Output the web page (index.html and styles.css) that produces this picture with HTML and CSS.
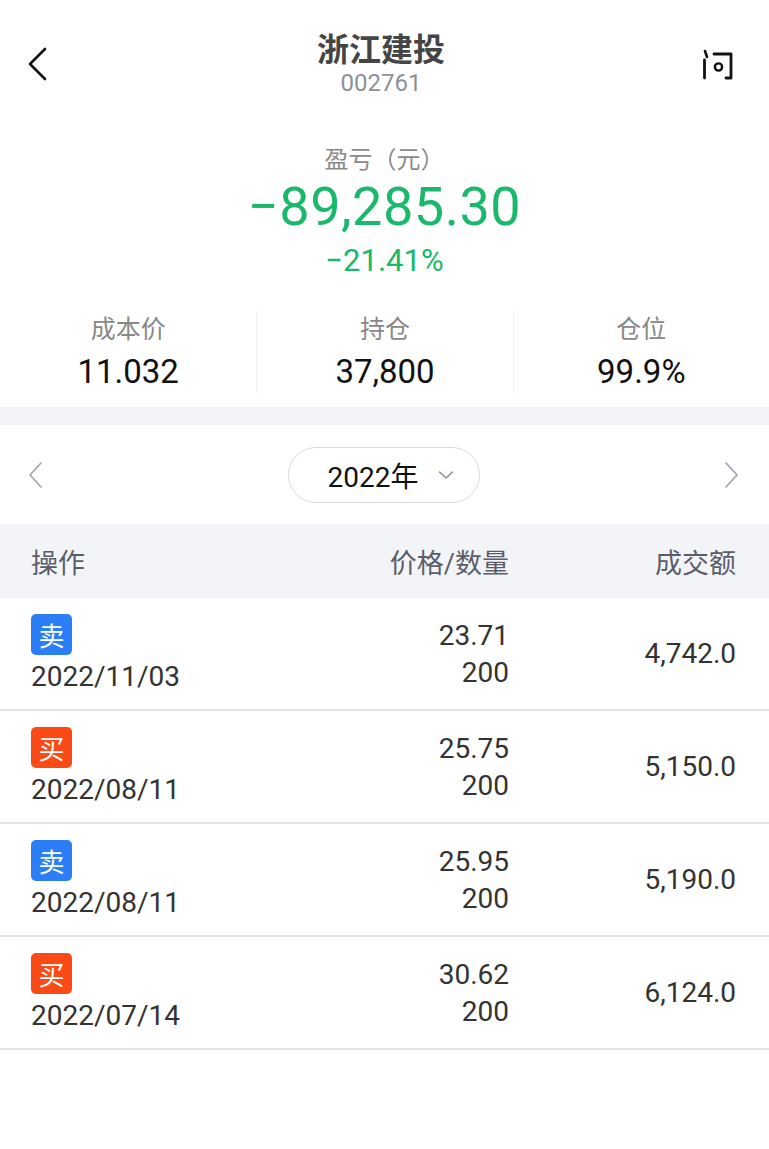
FILE: index.html
```html
<!DOCTYPE html>
<html lang="zh-CN">
<head>
    <meta charset="UTF-8">
    <meta name="viewport" content="width=device-width, initial-scale=1.0">
    <title>浙江建投 交易记录</title>
    <link rel="stylesheet" href="styles.css">
</head>
<body>
    <!-- Top bar -->
    <header class="topbar">
        <a class="back" href="#back">
            <svg width="24" height="36" viewBox="0 0 24 36">
                <path d="M18 3 L3 18 L18 33" fill="none" stroke="#111" stroke-width="2.6" stroke-linecap="round" stroke-linejoin="round"/>
            </svg>
        </a>
        <div class="title">
            <div class="name">浙江建投</div>
            <div class="code">002761</div>
        </div>
        <a class="ask" href="#ask">
            <svg width="34" height="34" viewBox="0 0 34 34">
                <path d="M4 2 L6 8" fill="none" stroke="#111" stroke-width="2.6" stroke-linecap="round"/>
                <path d="M3.5 11 V29" fill="none" stroke="#111" stroke-width="2.8" stroke-linecap="round"/>
                <path d="M13 5 H30 V29 H25" fill="none" stroke="#111" stroke-width="2.8" stroke-linecap="round" stroke-linejoin="round"/>
                <circle cx="17.5" cy="18" r="3.6" fill="none" stroke="#111" stroke-width="2.4"/>
            </svg>
        </a>
    </header>

    <!-- Profit summary -->
    <section class="summary">
        <div class="label">盈亏（元）</div>
        <div class="pnl">−89,285.30</div>
        <div class="pct">−21.41%</div>
    </section>

    <section class="stats">
        <div class="stat">
            <div class="stat-label">成本价</div>
            <div class="stat-value">11.032</div>
        </div>
        <div class="stat">
            <div class="stat-label">持仓</div>
            <div class="stat-value">37,800</div>
        </div>
        <div class="stat">
            <div class="stat-label">仓位</div>
            <div class="stat-value">99.9%</div>
        </div>
    </section>

    <div class="gap"></div>

    <!-- Year switcher -->
    <div class="year-row">
        <svg class="arrow" width="18" height="28" viewBox="0 0 18 28">
            <path d="M14 2 L3 14 L14 26" fill="none" stroke="#9da1ab" stroke-width="1.6" stroke-linecap="round" stroke-linejoin="round"/>
        </svg>
        <button class="year-pill">
            <span>2022年</span>
            <svg width="16" height="10" viewBox="0 0 16 10">
                <path d="M1.5 2 L8 8 L14.5 2" fill="none" stroke="#8a8fa0" stroke-width="1.6" stroke-linecap="round" stroke-linejoin="round"/>
            </svg>
        </button>
        <svg class="arrow" width="18" height="28" viewBox="0 0 18 28">
            <path d="M4 2 L15 14 L4 26" fill="none" stroke="#9da1ab" stroke-width="1.6" stroke-linecap="round" stroke-linejoin="round"/>
        </svg>
    </div>

    <!-- Trades -->
    <div class="table">
        <div class="thead">
            <div>操作</div>
            <div class="num">价格/数量</div>
            <div class="num">成交额</div>
        </div>

        <div class="trade">
            <div class="op">
                <span class="badge sell">卖</span>
                <div class="date">2022/11/03</div>
            </div>
            <div class="price num">
                <div>23.71</div>
                <div>200</div>
            </div>
            <div class="amount num">4,742.0</div>
        </div>

        <div class="trade">
            <div class="op">
                <span class="badge buy">买</span>
                <div class="date">2022/08/11</div>
            </div>
            <div class="price num">
                <div>25.75</div>
                <div>200</div>
            </div>
            <div class="amount num">5,150.0</div>
        </div>

        <div class="trade">
            <div class="op">
                <span class="badge sell">卖</span>
                <div class="date">2022/08/11</div>
            </div>
            <div class="price num">
                <div>25.95</div>
                <div>200</div>
            </div>
            <div class="amount num">5,190.0</div>
        </div>

        <div class="trade">
            <div class="op">
                <span class="badge buy">买</span>
                <div class="date">2022/07/14</div>
            </div>
            <div class="price num">
                <div>30.62</div>
                <div>200</div>
            </div>
            <div class="amount num">6,124.0</div>
        </div>
    </div>
</body>
</html>
```

FILE: styles.css
```css
* {
    margin: 0;
    padding: 0;
    box-sizing: border-box;
}

body {
    font-family: Roboto, "Noto Sans CJK SC", sans-serif;
    background: #fff;
    color: #222;
}

a {
    text-decoration: none;
    color: inherit;
}

/* top bar */
.topbar {
    display: flex;
    align-items: center;
    justify-content: space-between;
    padding: 30px 34px 0 27px;
}

.back,
.ask {
    display: flex;
    align-items: center;
    width: 36px;
}

.back {
    margin-top: 2px;
}

.ask {
    justify-content: flex-end;
    margin-top: 6px;
}

.title {
    text-align: center;
}

.name {
    font-size: 32px;
    line-height: 40px;
    font-weight: 700;
    color: #454545;
}

.code {
    font-size: 24px;
    line-height: 26px;
    color: #8d909a;
}

/* summary */
.summary {
    text-align: center;
    padding-top: 46px;
}

.label {
    font-size: 24px;
    line-height: 36px;
    color: #8a8a8a;
}

.pnl {
    font-size: 54px;
    line-height: 58px;
    letter-spacing: 0.5px;
    color: #1ab86a;
}

.pct {
    font-size: 31px;
    line-height: 50px;
    color: #1ab86a;
}

/* stats */
.stats {
    display: grid;
    grid-template-columns: repeat(3, 1fr);
    padding: 24px 0 13px;
}

.stat {
    text-align: center;
    border-left: 1px solid #eeeff2;
}

.stat:first-child {
    border-left: none;
}

.stat-label {
    font-size: 25px;
    line-height: 40px;
    color: #888;
}

.stat-value {
    font-size: 33px;
    line-height: 44px;
    color: #111;
}

.gap {
    height: 18px;
    background: #f2f3f7;
}

/* year switcher */
.year-row {
    display: flex;
    align-items: center;
    justify-content: space-between;
    height: 99px;
    padding: 0 29px 0 27px;
}

.year-pill {
    display: flex;
    align-items: center;
    gap: 20px;
    height: 56px;
    width: 192px;
    padding: 0 20px 0 39px;
    border: 1.5px solid #d9d9de;
    border-radius: 28px;
    background: #fff;
    font-family: Roboto, "Noto Sans CJK SC", sans-serif;
    font-size: 28px;
    color: #111;
}

/* table */
.thead,
.trade {
    display: grid;
    grid-template-columns: 1fr 200px 227px;
    padding: 0 33px 0 31px;
}

.thead {
    height: 74px;
    align-items: center;
    background: #f3f4f8;
    font-size: 27px;
    color: #5b5e6a;
}

.num {
    text-align: right;
}

.trade {
    height: 113px;
    align-items: center;
    border-bottom: 2px solid #e3e3e6;
    font-size: 28px;
    color: #333;
}

.op {
    align-self: start;
    padding-top: 16px;
}

.badge {
    display: flex;
    align-items: center;
    justify-content: center;
    width: 41px;
    height: 41px;
    border-radius: 5px;
    font-size: 26px;
    color: #fff;
}

.badge.sell {
    background: #2b7ef6;
}

.badge.buy {
    background: #fa4b17;
}

.date {
    margin-top: 4px;
    line-height: 36px;
}

.price div {
    line-height: 37px;
}
```
